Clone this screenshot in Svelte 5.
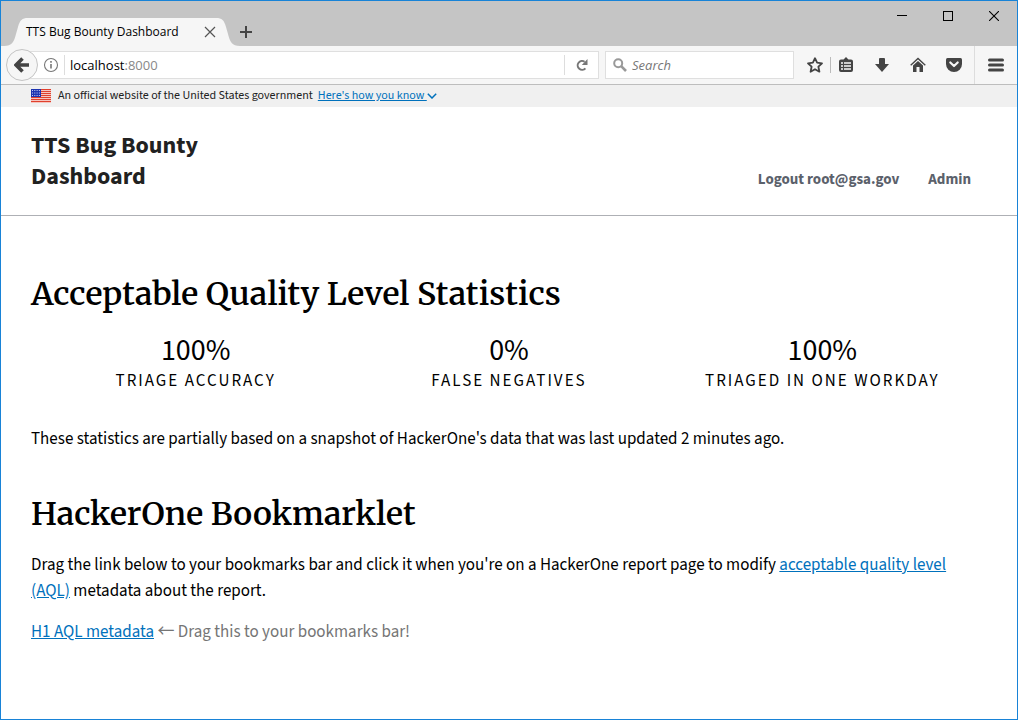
<script>
  const stats = [
    { value: '100%', label: 'Triage accuracy' },
    { value: '0%', label: 'False negatives' },
    { value: '100%', label: 'Triaged in one workday' }
  ];
  const stripes = [0, 2, 4, 6, 8, 10, 12];
</script>

<div class="window">
  <div class="titlebar">
    <div class="tab">
      <svg class="edge" width="24" height="28" viewBox="0 0 24 28"><path d="M0 28C8 28 10 24 12 16L14 9C16 2 18 0 24 0V28Z" /></svg>
      <div class="tab-body">
        <span class="tab-title">TTS Bug Bounty Dashboard</span>
        <button class="plain" aria-label="Close tab">
          <svg width="12" height="12" viewBox="0 0 12 12"><path d="M1 1L11 11M11 1L1 11" fill="none" stroke="#555" stroke-width="1.2" /></svg>
        </button>
      </div>
      <svg class="edge" width="24" height="28" viewBox="0 0 24 28"><path d="M24 28C16 28 14 24 12 16L10 9C8 2 6 0 0 0V28Z" /></svg>
    </div>
    <button class="plain new-tab" aria-label="New tab">
      <svg width="12" height="12" viewBox="0 0 12 12"><path d="M6 0V12M0 6H12" fill="none" stroke="#444" stroke-width="2" /></svg>
    </button>
    <div class="controls">
      <button class="plain" aria-label="Minimize">
        <svg width="10" height="10" viewBox="0 0 10 10"><path d="M0 4.500H10" stroke="#000" /></svg>
      </button>
      <button class="plain" aria-label="Maximize">
        <svg width="10" height="10" viewBox="0 0 10 10"><rect x=".5" y=".5" width="9" height="9" fill="none" stroke="#000" /></svg>
      </button>
      <button class="plain" aria-label="Close window">
        <svg width="10" height="10" viewBox="0 0 10 10"><path d="M0 0L10 10M10 0L0 10" stroke="#000" stroke-width="1.1" /></svg>
      </button>
    </div>
  </div>

  <div class="toolbar">
    <button class="back" aria-label="Back">
      <svg width="16" height="16" viewBox="0 0 16 16"><path d="M8.500 1.500L2 8L8.500 14.500M3 8H15" fill="none" stroke="#444" stroke-width="3.600" /></svg>
    </button>
    <div class="address">
      <button class="plain info" aria-label="Site information">
        <svg width="16" height="16" viewBox="0 0 16 16"><circle cx="8" cy="8" r="6.500" fill="none" stroke="#777" stroke-width="1.100" /><path d="M8 7V11.500M8 4V5.700" stroke="#777" stroke-width="1.600" /></svg>
      </button>
      <span class="url" role="textbox" tabindex="0" aria-label="Address">localhost<span>:8000</span></span>
      <button class="plain reload" aria-label="Reload">
        <svg width="12" height="12" viewBox="0 0 12 12"><path d="M9.400 9.300A4.400 4.400 0 1 1 8.600 2.800" fill="none" stroke="#777" stroke-width="2" /><path d="M11.500 0V6H5.800Z" fill="#777" /></svg>
      </button>
    </div>
    <label class="search">
      <svg width="14" height="14" viewBox="0 0 14 14"><circle cx="5.200" cy="5.200" r="4" fill="none" stroke="#999" stroke-width="2" /><path d="M8.200 8.200L13 13" stroke="#999" stroke-width="2.600" /></svg>
      <input type="text" placeholder="Search" aria-label="Search" />
    </label>
    <div class="tools">
      <button class="plain star" aria-label="Bookmark this page">
        <svg width="16" height="16" viewBox="0 0 16 16"><path d="M8 1.200L10.100 5.700L15 6.300L11.400 9.700L12.400 14.700L8 12.200L3.600 14.700L4.600 9.700L1 6.300L5.900 5.700Z" fill="none" stroke="#444" stroke-width="1.800" stroke-linejoin="round" /></svg>
      </button>
      <button class="plain list" aria-label="Show bookmarks">
        <svg width="16" height="16" viewBox="0 0 16 16"><path d="M3 2.500H5.500L8 0L10.500 2.500H13Q15 2.500 15 4.500V13Q15 15 13 15H3Q1 15 1 13V4.500Q1 2.500 3 2.500Z" fill="#444" /><path d="M3 6H5M6 6H13M3 9H5M6 9H13M3 12H5M6 12H13" stroke="#f6f6f6" stroke-width="1.700" /></svg>
      </button>
      <button class="plain" aria-label="Downloads">
        <svg width="16" height="16" viewBox="0 0 16 16"><path d="M5 2Q5 1 6 1H10Q11 1 11 2V7H15L8 15L1 7H5Z" fill="#444" /></svg>
      </button>
      <button class="plain" aria-label="Home">
        <svg width="16" height="16" viewBox="0 0 16 16"><path d="M.7 8.200L8 1.500L15.300 8.200" fill="none" stroke="#444" stroke-width="1.400" /><path d="M3 8.400L8 4L13 8.400V15H9.500V10H6.500V15H3Z" fill="#444" /></svg>
      </button>
      <button class="plain" aria-label="Save to Pocket">
        <svg width="16" height="16" viewBox="0 0 16 16"><path d="M1.500 1H14.500Q16 1 16 2.500V7A8 8 0 0 1 0 7V2.500Q0 1 1.500 1Z" fill="#444" /><path d="M4.300 5.500L8 9L11.700 5.500" fill="none" stroke="#f6f6f6" stroke-width="2.200" stroke-linecap="round" stroke-linejoin="round" /></svg>
      </button>
      <button class="plain menu" aria-label="Open menu">
        <svg width="16" height="16" viewBox="0 0 16 16"><path d="M1.500 3H14.500M1.500 8H14.500M1.500 13H14.500" stroke="#444" stroke-width="3" stroke-linecap="round" /></svg>
      </button>
    </div>
  </div>

  <div class="banner">
    <svg width="20" height="14" viewBox="0 0 20 14">
      <rect width="20" height="14" fill="#fff" />
      {#each stripes as y}<rect y={y} width="20" height="1.300" fill="#e0402c" />{/each}
      <rect width="10" height="8" fill="#1d33b1" />
      <path d="M1 1.500H10M1 4H10M1 6.500H10" stroke="#c9cff5" stroke-dasharray="1 1.300" />
    </svg>
    <span>An official website of the United States government</span>
    <button class="plain know"><span>Here's how you know&nbsp;</span><svg width="10" height="6" viewBox="0 0 10 6"><path d="M.8.800L5 5L9.200.800" fill="none" stroke="#0071bc" stroke-width="1.500" /></svg></button>
  </div>

  <header>
    <a class="brand" href="/">TTS Bug Bounty Dashboard</a>
    <nav>
      <a href="/logout">Logout root@gsa.gov</a>
      <a href="/admin">Admin</a>
    </nav>
  </header>

  <main>
    <h1>Acceptable Quality Level Statistics</h1>
    <dl>
      {#each stats as stat}
        <div class="stat">
          <dt>{stat.label}</dt>
          <dd>{stat.value}</dd>
        </div>
      {/each}
    </dl>
    <p>These statistics are partially based on a snapshot of HackerOne's data that was last updated 2 minutes ago.</p>
    <h1 class="second">HackerOne Bookmarklet</h1>
    <p>Drag the link below to your bookmarks bar and click it when you're on a HackerOne report page to modify <a href="#aql">acceptable quality level (AQL)</a> metadata about the report.</p>
    <p class="drag"><a href="#bookmarklet">H1 AQL metadata</a> <span><span class="arrow">←</span> Drag this to your bookmarks bar!</span></p>
  </main>
</div>

<style>
  :global(body) { margin: 0; }
  .window {
    box-sizing: border-box;
    min-height: 100vh;
    border: 1px solid #1883d7;
    background: #fff;
    color: #000;
    font-family: "Source Sans Pro", "Source Sans 3", "Noto Sans CJK SC", sans-serif;
    font-size: 17px;
    line-height: 26px;
  }
  svg { display: block; flex: none; }
  button, input { font: inherit; color: inherit; }
  .plain {
    display: flex;
    align-items: center;
    justify-content: center;
    border: 0;
    padding: 0;
    background: none;
  }
  .titlebar {
    display: flex;
    align-items: flex-end;
    height: 45px;
    background: #c5c5c5;
  }
  .tab { display: flex; margin-left: 3px; }
  .edge { fill: #f6f6f6; }
  .tab-body {
    display: flex;
    align-items: center;
    justify-content: space-between;
    width: 188px;
    height: 28px;
    background: #f6f6f6;
    font-family: "Segoe UI", "Open Sans", sans-serif;
    font-size: 12px;
  }
  .tab-title { white-space: nowrap; margin-left: -2px; }
  .new-tab { height: 28px; }
  .controls {
    display: flex;
    align-self: flex-start;
    margin-left: auto;
  }
  .controls button { width: 46px; height: 30px; }
  .toolbar {
    display: flex;
    align-items: center;
    height: 38px;
    border-bottom: 1px solid #bdbdbd;
    background: #f6f6f6;
    font-family: "Segoe UI", "Open Sans", sans-serif;
    font-size: 13px;
  }
  .back {
    display: flex;
    align-items: center;
    justify-content: center;
    box-sizing: border-box;
    flex: none;
    width: 32px;
    height: 32px;
    margin: 0 -16px 0 5px;
    border: 1px solid #c4c4c4;
    border-radius: 50%;
    padding: 0;
    background: #f6f6f6;
    z-index: 1;
  }
  .address, .search {
    display: flex;
    align-items: center;
    box-sizing: border-box;
    height: 28px;
    border: 1px solid #dfdfdf;
    background: #fff;
  }
  .address { flex: 3 1 0; }
  .info {
    height: 20px;
    border-right: 1px solid #ddd;
    margin-left: 20px;
    padding-right: 5px;
  }
  .url { flex: 1; padding-left: 5px; }
  .url span { color: #888; }
  .reload {
    width: 34px;
    height: 20px;
    border-left: 1px solid #ddd;
  }
  .search {
    flex: 0 1 189px;
    margin-left: 6px;
    padding-left: 7px;
    gap: 5px;
  }
  .search input {
    flex: 1;
    min-width: 0;
    border: 0;
    padding: 0;
    background: none;
    font-style: italic;
    outline: 0;
  }
  .search input::placeholder { color: #777; opacity: 1; }
  .tools { display: flex; align-items: center; height: 100%; margin-left: 5px; }
  .tools button { width: 36px; }
  .tools .star { width: 32px; height: 16px; border-right: 1px solid #bbb; }
  .tools .list { width: 30px; margin-right: 3px; }
  .tools .menu { width: 43px; height: 100%; margin-left: 2px; border-left: 1px solid #ddd; }

  .banner {
    display: flex;
    align-items: center;
    height: 22px;
    padding: 0 30px;
    background: #f0f0f0;
    color: #212121;
    font-size: 12px;
  }
  .banner > span { margin: 0 5px 0 7px; }
  .know { color: #0071bc; }
  .know span { text-decoration: underline; }
  header {
    display: flex;
    align-items: flex-end;
    justify-content: space-between;
    padding: 23px 46px 23px 30px;
    border-bottom: 1px solid #aeb0b5;
  }
  header a { text-decoration: none; font-weight: 700; }
  .brand {
    max-width: 200px;
    color: #212121;
    font-size: 24px;
    line-height: 31px;
  }
  nav { display: flex; gap: 29px; font-size: 15px; line-height: 24px; }
  nav a { color: #5b616b; }
  main { padding: 57px 30px 60px; }
  h1 {
    margin: 0;
    font-family: Merriweather, "DejaVu Serif Condensed", "DejaVu Serif", serif;
    font-size: 32px;
    font-weight: 600;
    line-height: 42px;
  }
  .second { margin-top: 41px; }
  dl {
    display: grid;
    grid-template-columns: repeat(3, 1fr);
    margin: 19px 0 32px;
    padding: 0 8px;
    text-align: center;
  }
  .stat { display: flex; flex-direction: column-reverse; }
  dt { text-transform: uppercase; letter-spacing: 2px; line-height: 26px; }
  dd { margin: 0; font-size: 30px; line-height: 34px; }
  p { margin: 0; }
  .second + p { margin-top: 17px; }
  .drag { margin-top: 15px; }
  .drag span { color: #757575; }
  .arrow { font-family: "Noto Sans CJK SC", sans-serif; line-height: 1; }
  main a { color: #0071bc; text-decoration: underline; }
</style>
